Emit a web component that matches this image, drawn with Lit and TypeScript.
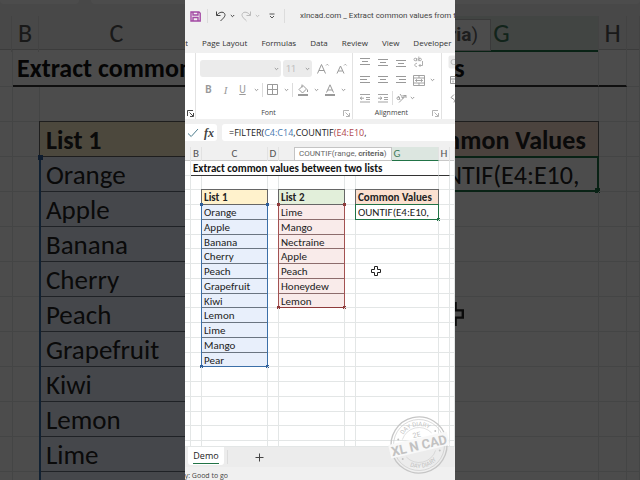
import { LitElement, html, css, svg, nothing, type TemplateResult } from "lit";
import { customElement, property } from "lit/decorators.js";
import { classMap } from "lit/directives/class-map.js";

const LIST_1 = ["Orange", "Apple", "Banana", "Cherry", "Peach", "Grapefruit", "Kiwi", "Lemon", "Lime", "Mango", "Pear"];
const LIST_2 = ["Lime", "Mango", "Nectraine", "Apple", "Peach", "Honeydew", "Lemon"];
const COLUMNS = ["", "B", "C", "D", "E", "F", "G", "H", ""];

const icon = (w: number, h: number, body: TemplateResult, cls = "") =>
  html`<svg class=${cls} width=${w} height=${h} viewBox="0 0 ${w} ${h}" fill="none" stroke="currentColor" aria-hidden="true">${body}</svg>`;

const caret = () => icon(5, 4, svg`<path d="M.8 1l1.7 1.7L4.2 1"/>`);
const launcher = () => icon(7, 7, svg`<path d="M.5 6V.5H6M2.5 2.5l3.5 3.5M6.5 3v3.5H3" stroke-width=".9"/>`);
const lines = (rows: [number, number, number][]) =>
  icon(12, 10, svg`${rows.map(([x1, x2, y]) => svg`<path d="M${x1} ${y}H${x2}"/>`)}`);

/** The worksheet grid with its column letters, ranges and pointer. */
@customElement("work-sheet")
export class WorkSheet extends LitElement {
  @property({ type: Boolean, reflect: true }) large = false;

  static styles = css`
    :host {
      display: grid;
      grid-template-rows: 14px minmax(0, 1fr);
      position: relative;
      overflow: hidden;
      font-family: Carlito, Lato, "Open Sans", sans-serif;
      font-size: 11px;
      line-height: 15px;
      color: #222;
      background: #fff;
      --cols: 6fr 11fr 66fr 11fr 66fr 11fr 83fr 11fr 5fr;
      --rows: repeat(19, minmax(0, 1fr)) 6px;
      --pad: 2px;
      --handle: 3px;
      --edge: 1px;
    }
    :host([large]) {
      grid-template-rows: 34px minmax(0, 1fr);
      font-size: 26px;
      line-height: 36px;
      --cols: 12fr 27fr 156fr 27fr 156fr 27fr 194fr 28fr 13fr;
      --rows: 37px repeat(12, 35px);
      --pad: 6px;
      --handle: 5px;
      --edge: 2px;
    }
    .letters, table {
      display: grid;
      grid-template-columns: var(--cols);
      margin: 0;
    }
    .letters {
      background: #f0f0f0;
      color: #555;
      border-bottom: 1px solid #c8c8c8;
      box-sizing: border-box;
      text-align: center;
      line-height: 13px;
    }
    :host([large]) .letters { line-height: 34px; }
    .letter {
      border-right: 1px solid #e2e2e2;
      min-width: 0;
      box-sizing: border-box;
    }
    .letter.picked {
      background: #dce6e0;
      color: #3c7a5a;
      border-bottom: var(--edge) solid #217346;
    }
    table { grid-template-rows: var(--rows); }
    tbody, tr { display: contents; }
    td, th {
      position: relative;
      box-sizing: border-box;
      min-width: 0;
      min-height: 0;
      padding: 0 var(--pad);
      border-right: 1px solid #e3e6e6;
      border-bottom: 1px solid #e3e6e6;
      text-align: left;
      white-space: nowrap;
      font-weight: 400;
    }
    .title {
      grid-column: span 6;
      font-weight: 700;
      color: #111;
      border-bottom: var(--edge) solid #333;
    }
    :host([large]) .title { padding-left: 4px; }
    :host([large]) .l1 { font-size: 27px; }
    .rule { border-bottom: var(--edge) solid #333; }
    .head { font-weight: 700; color: #222; }
    .h1 { background: #fff2cc; }
    .h2 { background: #e2efda; }
    .h3 { background: #fbe0d0; }
    .l1 { background: #e8effb; }
    .l2 { background: #f9ebea; }
    .head::before, .l1::before, .l2::before, .active::before {
      content: "";
      position: absolute;
      inset: -1px;
      border: 1px solid #666;
    }
    .l1::before { border: 0 solid #3b6fa8; border-width: 0 var(--edge); border-bottom: 1px solid #6a7480; }
    .l2::before { border: 0 solid #a35252; border-width: 0 1px; border-bottom: 1px solid #8c6c6c; }
    .l1.end::before { border-bottom-color: #3b6fa8; }
    .l2.end::before { border-bottom-color: #8e3b3b; }
    .active::before { border: var(--edge) solid #217346; }
    .dot {
      position: absolute;
      width: var(--handle);
      height: var(--handle);
      background: #2f5f9a;
    }
    .l2 .dot { background: #8e3b3b; }
    .active .dot { background: #217346; }
    .tl { left: -2px; top: -2px; }
    .tr { right: -2px; top: -2px; }
    .bl { left: -2px; bottom: -2px; }
    .br { right: -2px; bottom: -2px; }
    .tip {
      position: absolute;
      right: 23.5%;
      top: 0;
      padding: 0 4px;
      font: 8px/12px Roboto, sans-serif;
      color: #666;
      background: #fff;
      border: 1px solid #c4c4c4;
      box-sizing: border-box;
      white-space: nowrap;
    }
    :host([large]) .tip { right: 149px; top: 3px; padding: 0 12px; font-size: 19px; line-height: 30px; }
    .pointer { position: absolute; left: 69%; top: 119px; width: 10px; height: 10px; }
    :host([large]) .pointer { left: 440px; top: 286px; width: 24px; height: 24px; }
  `;

  private ends(i: number, last: number) {
    if (i === 0) return html`<i class="dot tl"></i><i class="dot tr"></i>`;
    if (i === last) return html`<i class="dot bl"></i><i class="dot br"></i>`;
    return nothing;
  }

  private row(i: number) {
    const one = LIST_1[i];
    const two = LIST_2[i];
    return html`<tr>
      <td></td><td></td>
      <td class=${classMap({ l1: !!one, end: i === LIST_1.length - 1 })}>${one ?? nothing}${this.ends(i, LIST_1.length - 1)}</td>
      <td></td>
      <td class=${classMap({ l2: !!two, end: i === LIST_2.length - 1 })}>${two ?? nothing}${two ? this.ends(i, LIST_2.length - 1) : nothing}</td>
      <td></td>
      <td class=${classMap({ active: i === 0 })}>${i === 0 ? html`OUNTIF(E4:E10,<i class="dot br"></i>` : nothing}</td>
      <td></td><td></td>
    </tr>`;
  }

  render() {
    const count = this.large ? 10 : 17;
    return html`
      <div class="letters">
        ${COLUMNS.map((c) => html`<span class=${classMap({ letter: true, picked: c === "G" })}>${c}</span>`)}
      </div>
      <table aria-label="Demo worksheet">
        <tbody>
          <tr><td></td><td class="title" colspan="6">Extract common values between two lists</td><td class="rule"></td><td></td></tr>
          <tr>${COLUMNS.map(() => html`<td></td>`)}</tr>
          <tr>
            <td></td><td></td><th class="head h1">List 1</th><td></td><th class="head h2">List 2</th>
            <td></td><th class="head h3">Common Values</th><td></td><td></td>
          </tr>
          ${Array.from({ length: count }, (_, i) => this.row(i))}
        </tbody>
      </table>
      <div class="tip" role="tooltip">COUNTIF(range, <b>criteria</b>)</div>
      <svg class="pointer" viewBox="0 0 10 10" fill="#fff" stroke="#222" aria-hidden="true">
        <path d="M3.5 .5h3v3h3v3h-3v3h-3v-3h-3v-3h3z"/>
      </svg>
    `;
  }
}

@customElement("app-root")
export class AppRoot extends LitElement {
  static styles = css`
    :host {
      display: grid;
      grid-template: minmax(0, 1fr) / 1fr;
      justify-items: center;
      height: 100vh;
      overflow: hidden;
      background: #000;
      font-family: Roboto, "Noto Sans", sans-serif;
      font-size: 9px;
      line-height: 12px;
      color: #444;
    }
    .backdrop, .phone { grid-area: 1 / 1; }
    .backdrop {
      width: 100%;
      position: relative;
      display: grid;
      grid-template-rows: 16px minmax(0, 1fr);
      background: #f0f0f0;
    }
    .backdrop::after {
      content: "";
      position: absolute;
      inset: 0;
      background: rgb(0 0 0 / 70%);
    }
    .bar-end { display: flex; gap: 12px; height: 4px; }
    .bar-end i { flex: 1; background: #fff; border-radius: 0 0 8px 8px; }
    .bar-end i:first-child { flex: 0 0 79px; }
    .phone {
      position: relative;
      height: 100%;
      aspect-ratio: 9 / 16;
      display: grid;
      grid-template-columns: minmax(0, 1fr);
      grid-template-rows: 32px 21px 66px 28px minmax(0, 1fr) 20px 13px;
      background: #f0f0f0;
      overflow: hidden;
    }
    button, select {
      font: inherit;
      color: inherit;
      background: none;
      border: 0;
      margin: 0;
      padding: 0;
      appearance: none;
      flex: none;
    }
    button { display: grid; place-items: center; }
    .titlebar { display: flex; align-items: center; white-space: nowrap; padding-left: 4px; }
    .save { width: 13px; color: #a349a4; }
    .sep { width: 1px; height: 14px; background: #dcdcdc; flex: none; }
    .titlebar .sep { margin: 0 5px; }
    .undo { width: 15px; }
    .redo { width: 15px; margin-left: 2px; }
    .drop { width: 8px; }
    .more { width: 15px; margin-left: 3px; }
    .dim { color: #bbb; }
    .name { flex: 1; min-width: 0; overflow: hidden; margin-left: 10px; font-size: 8px; }
    .tabs { display: flex; gap: 14px; align-items: center; white-space: nowrap; font: 8px/12px "Open Sans", sans-serif; color: #333; }
    .first { width: 3px; display: flex; justify-content: flex-end; overflow: hidden; }
    .ribbon { display: flex; background: #fff; color: #999; overflow: hidden; }
    .group { display: grid; grid-template-rows: minmax(0, 1fr) 12px; border-right: 1px solid #e2e2e2; flex: none; }
    .prev { width: 10px; }
    .font { width: 156px; }
    .align { width: 88px; }
    .foot { display: flex; align-items: center; font: 7px/12px "Open Sans", sans-serif; }
    .foot span { flex: 1; text-align: center; color: #444; }
    .foot button { width: 11px; }
    .prev .foot { color: #333; }
    .font .foot, .align .foot { color: #aaa; }
    .font-body { display: grid; grid-template-rows: 17px 17px; gap: 4px; padding: 7px 0 0 4px; align-content: start; }
    .line { display: flex; align-items: center; }
    .line .drop { width: 10px; }
    .line .sep { margin: 0 1px; }
    .pick { position: relative; display: flex; align-items: center; height: 17px; border-radius: 3px; background: #ebebeb; margin-right: 2px; }
    .pick select { width: 100%; height: 100%; padding-left: 3px; color: #bbb; }
    .pick svg { position: absolute; right: 2px; }
    .family { width: 81px; }
    .size { width: 29px; }
    .grow { width: 18px; }
    .b { width: 17px; height: 17px; font-size: 10px; }
    .bold { font-weight: 700; }
    .italic { font-style: italic; font-family: "Liberation Serif", serif; font-size: 11px; }
    .under { text-decoration: underline; }
    .align-body { display: grid; grid-template-columns: repeat(4, 18px) 8px; grid-template-rows: repeat(3, 18px); padding-left: 3px; }
    .split { border-left: 1px solid #ddd; height: 14px; align-self: center; }
    .start { justify-items: start; }
    .next { display: grid; grid-template-rows: repeat(3, 18px); padding-left: 6px; align-items: center; justify-items: start; }
    .formula { display: flex; gap: 5px; padding: 5px 0 6px; }
    .entry { width: 32px; background: #fff; display: flex; border-radius: 0 3px 3px 0; }
    .entry button { flex: 1; }
    .entry .fx { font: italic 700 12px/14px "Liberation Serif", serif; color: #444; }
    .input { flex: 1; background: #fff; border-radius: 3px 0 0 3px; padding-left: 7px; font: 9px/17px "Open Sans", sans-serif; color: #222; outline: 0; white-space: nowrap; overflow: hidden; }
    .blue { color: #4a7ab0; }
    .red { color: #b0484c; }
    .sheets { display: flex; align-items: center; background: #ececec; padding-left: 3px; }
    .demo { width: 36px; height: 18px; align-self: start; background: #fff; border-radius: 0 0 3px 3px; color: #222; font: 9px/14px "Open Sans", sans-serif; }
    .demo span { border-bottom: 1px solid #217346; }
    .sheets .sep { margin: 0 23px 0 3px; }
    .add { width: 16px; }
    .status { display: flex; justify-content: flex-end; width: 43px; overflow: hidden; white-space: nowrap; font: 7px/17px "Open Sans", sans-serif; }
    .status span { flex: none; }
    .stamp { position: absolute; right: 5px; bottom: 4px; width: 62px; height: 62px; }
  `;

  private letterA(label: string, shape: string, x: number) {
    return html`<button class="grow" aria-label=${label}>
      ${icon(14, 14, svg`<path d=${shape} /><path d="M${x} 3.5l1.3-1.3 1.3 1.3" stroke-width=".8"/>`)}
    </button>`;
  }

  render() {
    return html`
      <div class="backdrop" aria-hidden="true">
        <div class="bar-end"><i></i><i></i></div>
        <work-sheet large></work-sheet>
      </div>
      <main class="phone">
        <header class="titlebar">
          <button class="save" aria-label="Save">${icon(11, 11, svg`<path d="M1 1h8l1.2 1.2V10H1zM3 1v3h5V1M3 10V6.5h5V10" stroke-width="1.4"/>`)}</button>
          <i class="sep"></i>
          <button class="undo" aria-label="Undo">${icon(12, 12, svg`<path d="M1.5 1.5v4h4M1.8 5.2C4 2 8 1.2 9.6 3.6C11 6 8.5 8 5.5 11"/>`)}</button>
          <button class="drop" aria-label="Undo history">${caret()}</button>
          <button class="redo dim" aria-label="Redo">${icon(12, 12, svg`<path d="M10.5 1.5v4h-4M10.2 5.2C8 2 4 1.2 2.4 3.6C1 6 3.5 8 6.5 11"/>`)}</button>
          <button class="drop dim" aria-label="Redo history">${caret()}</button>
          <button class="more" aria-label="Customize toolbar">${icon(6, 6, svg`<path d="M.5 1h5M1 3l2 2 2-2" stroke-width=".9"/>`)}</button>
          <i class="sep"></i>
          <span class="name">xlncad.com _ Extract common values from two lists</span>
        </header>
        <nav class="tabs">
          <button class="first">Insert</button>
          <button>Page Layout</button><button>Formulas</button><button>Data</button>
          <button>Review</button><button>View</button><button>Developer</button>
        </nav>
        <section class="ribbon">
          <div class="group prev">
            <span></span>
            <div class="foot"><button aria-label="Clipboard settings">${launcher()}</button></div>
          </div>
          <div class="group font">
            <div class="font-body">
              <div class="line">
                <label class="pick family"><select aria-label="Font"><option></option></select>${caret()}</label>
                <label class="pick size"><select aria-label="Font size"><option>11</option></select>${caret()}</label>
                ${this.letterA("Increase font size", "M1.5 11.5L5.5 2.5l4 9M3 8.5h5", 10)}
                ${this.letterA("Decrease font size", "M3 11.5L6.5 4l3.5 7.5M4.3 9h4.4", 10)}
              </div>
              <div class="line">
                <button class="b bold">B</button><button class="b italic">I</button><button class="b under">U</button>
                <button class="drop" aria-label="Underline options">${caret()}</button><i class="sep"></i>
                <button class="b" aria-label="Borders">${icon(11, 11, svg`<path d="M.5 .5h10v10H.5zM5.5 .5v10M.5 5.5h10"/>`)}</button>
                <button class="drop" aria-label="Border options">${caret()}</button><i class="sep"></i>
                <button class="b" aria-label="Fill color">${icon(12, 12, svg`<path d="M2 5.5l4-4 3.5 3.5-4 4zM5 .5v3M10.5 5.5v2.5"/><path d="M1 11h10" stroke-width="2"/>`)}</button>
                <button class="drop" aria-label="Fill options">${caret()}</button>
                <button class="b" aria-label="Font color">${icon(12, 12, svg`<path d="M2.5 8.5L6 .8l3.5 7.7M3.8 6h4.4"/><path d="M1 11h10" stroke-width="2"/>`)}</button>
                <button class="drop" aria-label="Color options">${caret()}</button>
              </div>
            </div>
            <div class="foot"><span>Font</span><button aria-label="Font settings">${launcher()}</button></div>
          </div>
          <div class="group align">
            <div class="align-body">
              <button aria-label="Top align">${lines([[1, 11, 1.5], [3, 9, 4.5], [1, 11, 7.5]])}</button>
              <button aria-label="Middle align">${lines([[1, 11, 2.5], [3, 9, 5.5], [1, 11, 8.5]])}</button>
              <button aria-label="Bottom align">${lines([[1, 11, 3.5], [3, 9, 6.5], [1, 11, 9.5]])}</button>
              <button aria-label="Wrap text">${icon(12, 12, svg`<path d="M1 3.5a1.3 1.3 0 1 0 2.6 0a1.3 1.3 0 1 0-2.6 0M3.8 2v3.2M5.8 .5v4.7M5.8 3.5a1.3 1.3 0 1 0 2.6 0a1.3 1.3 0 1 0-2.6 0M4 7.5a1.6 1.6 0 1 0 0 3M6 9.5h3.5V5M7.5 8L6 9.5 7.5 11" stroke-width=".8"/>`)}</button>
              <span></span>
              <button aria-label="Align left">${lines([[1, 11, 1.5], [1, 8, 4.5], [1, 11, 7.5]])}</button>
              <button aria-label="Center">${lines([[1, 11, 1.5], [3, 9, 4.5], [1, 11, 7.5]])}</button>
              <button aria-label="Align right">${lines([[1, 11, 1.5], [4, 11, 4.5], [1, 11, 7.5]])}</button>
              <button aria-label="Merge cells">${icon(12, 11, svg`<path d="M.5 .5h11v10H.5zM.5 3h11M.5 8h11M6 .5V3M6 8v2.5M2.5 5.5h7M4 4.3L2.5 5.5 4 6.7M8 4.3l1.5 1.2L8 6.7" stroke-width=".9"/>`)}</button>
              <button aria-label="Merge options">${caret()}</button>
              <button aria-label="Decrease indent">${icon(12, 10, svg`<path d="M1 1.5h10M7 4.5h4M7 6.5h4M1 9h10M1 5.2h4M3 3.7L1.2 5.2 3 6.7" stroke-width=".9"/>`)}</button>
              <button aria-label="Increase indent">${icon(12, 10, svg`<path d="M1 1.5h10M7 4.5h4M7 6.5h4M1 9h10M1 5.2h4M3.2 3.7L5 5.2 3.2 6.7" stroke-width=".9"/>`)}</button>
              <button class="split" aria-label="Orientation">${icon(11, 11, svg`<path d="M3 9.5L10 2.5M7.5 2.5H10V5M1 5.5a1.3 1.3 0 1 0 2.6-.5a1.3 1.3 0 1 0-2.6 .5M4 7L2.5 3M4 1l3 4M5.5 4.5a1.3 1.3 0 1 0 1-2" stroke-width=".9"/>`)}</button>
              <button class="start" aria-label="Orientation options">${caret()}</button>
            </div>
            <div class="foot"><span>Alignment</span><button aria-label="Alignment settings">${launcher()}</button></div>
          </div>
          <div class="next">
            ${icon(10, 14, svg`<rect x=".5" y=".5" width="12" height="13" rx="2" fill="#ebebeb" stroke="none"/><path d="M8 4.5H5.5a2 2 0 0 0 0 5H8" stroke="#bbb"/>`)}
            ${icon(10, 10, svg`<path d="M2.5 1.5h8v7h-8zM2.5 4h8M5 5.5v2"/>`)}
            ${icon(10, 10, svg`<path d="M6 1.5L3 4.5l3 2M7 6.5l-1 3"/>`)}
          </div>
        </section>
        <section class="formula">
          <div class="entry">
            <button aria-label="Enter">${icon(12, 10, svg`<path d="M1 5.5l3.2 3L11 1" stroke="#4c7c8c"/>`)}</button>
            <button class="fx" aria-label="Insert function">fx</button>
          </div>
          <div class="input" role="textbox" contenteditable="true" spellcheck="false" aria-label="Formula">=FILTER(<span class="blue">C4:C14</span>,COUNTIF<span class="red">(E4:E10</span>,</div>
        </section>
        <work-sheet></work-sheet>
        <nav class="sheets">
          <button class="demo"><span>Demo</span></button>
          <i class="sep"></i>
          <button class="add" aria-label="New sheet">${icon(9, 9, svg`<path d="M4.5 .5v8M.5 4.5h8"/>`)}</button>
        </nav>
        <footer class="status"><span>Accessibility: Good to go</span></footer>
        <svg class="stamp" viewBox="-31 -31 62 62" role="img" aria-label="XL N CAD">
          <defs>
            <path id="top" d="M-19 0A19 19 0 0 1 19 0"/>
            <path id="low" d="M-23 0A23 23 0 0 0 23 0"/>
          </defs>
          <g transform="rotate(-13)" fill="none" stroke="#c6c6c6">
            <circle r="28" stroke-width="1.3"/>
            <circle r="25.5" stroke-width=".6"/>
            <path d="M-15 -9A17.5 17.5 0 0 1 15 -9M-15 9A17.5 17.5 0 0 0 15 9" stroke-width=".5"/>
            <path d="M-30 -7H30V7H-30z" fill="#f8f8f8" stroke="none"/>
            <g fill="#c2c2c2" stroke="none" font-family="Roboto, sans-serif" font-weight="700" text-anchor="middle">
              <text y="5" font-size="13">XL N CAD</text>
              <text y="-8" font-size="7" font-weight="400">2E</text>
              <text font-size="6" font-weight="400"><textPath href="#top" startOffset="50%">DAY DIARY</textPath></text>
              <text font-size="6" font-weight="400"><textPath href="#low" startOffset="50%">DAY DIARY</textPath></text>
              <circle cx="-19" cy="-10" r="1"/><circle cx="19" cy="-10" r="1"/>
              <circle cx="-19" cy="10" r="1"/><circle cx="19" cy="10" r="1"/>
            </g>
          </g>
        </svg>
      </main>
    `;
  }
}
